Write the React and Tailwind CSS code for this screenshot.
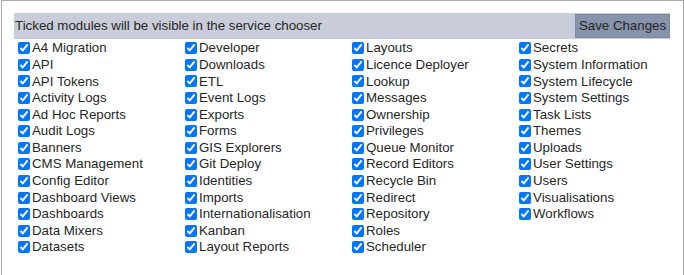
import React from 'react';

const modules = [
  ['A4 Migration', 'API', 'API Tokens', 'Activity Logs', 'Ad Hoc Reports', 'Audit Logs', 'Banners', 'CMS Management', 'Config Editor', 'Dashboard Views', 'Dashboards', 'Data Mixers', 'Datasets'],
  ['Developer', 'Downloads', 'ETL', 'Event Logs', 'Exports', 'Forms', 'GIS Explorers', 'Git Deploy', 'Identities', 'Imports', 'Internationalisation', 'Kanban', 'Layout Reports'],
  ['Layouts', 'Licence Deployer', 'Lookup', 'Messages', 'Ownership', 'Privileges', 'Queue Monitor', 'Record Editors', 'Recycle Bin', 'Redirect', 'Repository', 'Roles', 'Scheduler'],
  ['Secrets', 'System Information', 'System Lifecycle', 'System Settings', 'Task Lists', 'Themes', 'Uploads', 'User Settings', 'Users', 'Visualisations', 'Workflows'],
];

export default function App() {
  return (
    <div className="w-[684px] h-[275px] bg-white overflow-hidden font-['Liberation_Sans',Arial,sans-serif] text-[13.3px] text-[#262626]">
      <div className="ml-[1px] w-[683px] h-[275px] border border-b-0 border-[#a9a9a9] pl-[12px] pt-[12px]">
        {/* Header */}
        <div className="w-[656px] h-[26px] bg-[#c9cdd9] flex items-center justify-between">
          <span className="pl-[1px]">Ticked modules will be visible in the service chooser</span>
          <button className="h-[24px] w-[95px] bg-[#8792ab] border border-[#7c87a0] text-[#262626] text-[13.3px] flex items-center justify-center">
            Save Changes
          </button>
        </div>

        {/* Module list */}
        <div className="grid grid-cols-[167px_167px_167px_167px] pt-[1px]">
          {modules.map((col, i) => (
            <div key={i} className="flex flex-col">
              {col.map((name) => (
                <label key={name} className="h-[16.6px] flex items-center whitespace-nowrap">
                  <input type="checkbox" defaultChecked className="ml-[4px] mr-[2px] w-[12px] h-[12px]" />
                  <span>{name}</span>
                </label>
              ))}
            </div>
          ))}
        </div>
      </div>
    </div>
  );
}
